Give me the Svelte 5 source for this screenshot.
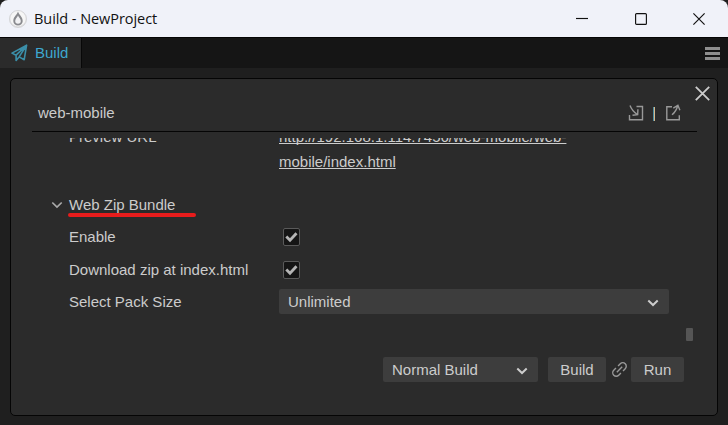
<script>
  let enabled = $state(true);
  let download = $state(true);
</script>

{#snippet chevron()}
  <svg class="chevron" width="12" height="8" viewBox="0 0 12 8"><path d="M1.3 1.5 6 6l4.7-4.5" /></svg>
{/snippet}

{#snippet check(on)}
  <svg width="13" height="12" viewBox="0 0 13 12">
    {#if on}<path d="M1.3 5.5 5 9.3 11.5 2.3" fill="none" stroke="#b5b5b5" stroke-width="2.8" />{/if}
  </svg>
{/snippet}

<div class="window">
  <header class="title-bar">
    <svg class="logo" width="18" height="18" viewBox="0 0 18 18">
      <circle cx="9" cy="9" r="8.6" fill="#dededf" stroke="#cfcfd1" stroke-width=".7" />
      <circle cx="9" cy="8.7" r="7.6" fill="#f6f6f6" />
      <path d="M9 1.6C8.3 4.6 4.3 6.9 4.3 10.9a4.7 4.7 0 0 0 9.4 0C13.7 6.9 9.7 4.6 9 1.6Z" fill="#898a8e" />
      <path d="M9 5.4C8.5 7.2 6.2 8.5 6.2 11a2.8 2.8 0 0 0 5.6 0C11.8 8.5 9.5 7.2 9 5.4Z" fill="#f1f1f3" />
    </svg>
    <span class="title">Build - NewProject</span>
    <div class="controls">
      <svg width="12" height="12" viewBox="0 0 12 12"><path d="M0 5.5h12" /></svg>
      <svg width="12" height="12" viewBox="0 0 12 12"><rect x=".6" y=".6" width="10.8" height="10.8" rx="1" /></svg>
      <svg width="12" height="12" viewBox="0 0 12 12"><path d="m.4.4 11.2 11.2M11.6.4.4 11.6" /></svg>
    </div>
  </header>

  <nav class="tabs">
    <div class="tab">
      <svg width="17" height="18" viewBox="0 0 17 18" fill="none" stroke="#3b8fa9" stroke-width="1.6" stroke-linejoin="round">
        <path d="M15.6 1.2 1 9.1l4.1 2.1v5.2l3-3.5 5.1 2.8ZM5.1 11.2 15.6 1.2 8.1 12.9" />
      </svg>
      <span>Build</span>
    </div>
    <svg class="menu" width="15" height="13" viewBox="0 0 15 13" fill="#8f8f8f">
      <path d="M0 0h15v3H0zM0 5h15v3H0zM0 10h15v3H0z" />
    </svg>
  </nav>

  <main>
    <section class="panel">
      <svg class="close" width="15" height="15" viewBox="0 0 15 15"><path d="m.8.8 13.4 13.4M14.2.8.8 14.2" /></svg>
      <div class="head">
        <span>web-mobile</span>
        <div class="head-icons">
          <svg width="16" height="17" viewBox="0 0 16 17"><path d="M8.5 2.5h6v13.3h-13V11M2 1.5c1.5 3.8 3.6 6.5 7.2 8.9M4.5 11.3l5.2-.6.2-5.4" /></svg>
          <i></i>
          <svg width="16" height="17" viewBox="0 0 16 17"><path d="M7 2.8H1.8v13h12.5v-4.5M7 10.8c2.9-2.3 4.6-5 5.8-9.3M8.3 4.1l4.6-2.8 2 5" /></svg>
        </div>
      </div>
      <div class="scroll">
        <div class="row url">
          <label>Preview URL</label>
          <a href="#url">http://192.168.1.114:7456/web-mobile/web-<br />mobile/index.html</a>
        </div>
        <div class="group">
          {@render chevron()}
          <span class="group-title">Web Zip Bundle</span>
        </div>
        <div class="row">
          <label>Enable</label>
          <button class="box" onclick={() => (enabled = !enabled)}>{@render check(enabled)}</button>
        </div>
        <div class="row second">
          <label>Download zip at index.html</label>
          <button class="box" onclick={() => (download = !download)}>{@render check(download)}</button>
        </div>
        <div class="row">
          <label>Select Pack Size</label>
          <div class="select wide"><span>Unlimited</span>{@render chevron()}</div>
        </div>
        <div class="thumb"></div>
      </div>
      <footer>
        <div class="select mode"><span>Normal Build</span>{@render chevron()}</div>
        <div class="button">Build</div>
        <svg class="link" width="17" height="17" viewBox="0 0 17 17">
          <g transform="rotate(-45 8.5 8.5)">
            <path d="M7 12H3.9a3.5 3.5 0 0 1 0-7H7M10 5h3.1a3.5 3.5 0 0 1 0 7H10M4.7 8.5h7.6" />
          </g>
        </svg>
        <div class="button run">Run</div>
      </footer>
    </section>
  </main>
</div>

<style>
  :global(body) { margin: 0; background: #1f1f1f; }
  .window {
    width: 728px; height: 425px; overflow: hidden; display: flex; flex-direction: column;
    background: #1f1f1f; color: #ccc; font: 15px/25px "Liberation Sans", Arial, sans-serif;
  }
  svg { display: block; flex: none; }
  .title-bar {
    height: 37px; display: flex; align-items: center; background: #f0f2f9;
    border-bottom: 1px solid #050505; border-radius: 8px 8px 0 0; padding: 0 23px 0 9px; color: #111;
  }
  .title { margin-left: 7px; font: 14.5px/20px "Open Sans", sans-serif; letter-spacing: -.06px; }
  .controls { margin-left: auto; display: flex; gap: 46.5px; }
  .controls svg { fill: none; stroke: #111; stroke-width: 1.15; }
  .tabs { height: 30px; display: flex; align-items: center; background: #151515; padding-right: 8px; }
  .tab {
    box-sizing: border-box; width: 82px; height: 30px; padding: 0 0 1px 11px; display: flex; align-items: center;
    gap: 7px; background: #2b2b2b; border-right: 1px solid #080808; color: #3ea7cf;
  }
  .tab span { line-height: 24px; }
  .menu { margin-left: auto; }
  main { flex: 1; padding: 10px 10px 9px; display: flex; }
  .panel {
    position: relative; box-sizing: border-box; width: 708px; height: 338px; border: 1px solid #050505;
    border-radius: 5px; background: #2b2b2b; display: flex; flex-direction: column;
  }
  .close { position: absolute; right: 7px; top: 7px; fill: none; stroke: #ccc; stroke-width: 1.8; }
  .head {
    box-sizing: border-box; height: 53px; margin: 0 20px 0 21px; padding: 21px 16px 6px 6px;
    border-bottom: 1px solid #050505; display: flex; align-items: center; justify-content: space-between;
  }
  .head-icons { display: flex; align-items: center; gap: 0; }
  .head-icons svg { fill: none; stroke: #999; stroke-width: 1.4; }
  .head-icons i { width: 2px; height: 14px; background: linear-gradient(90deg, #4a8ca3 50%, #d6b98c 50%); margin: 2px 10px 0 9px; }
  .scroll { position: relative; height: 207px; margin-top: 6px; padding-left: 58px; overflow: hidden; }
  .row { display: flex; align-items: center; height: 25px; margin-bottom: 7px; }
  .row label { width: 210px; flex: none; }
  .url { height: 50px; margin-top: -14px; margin-bottom: 18px; align-items: flex-start; }
  .url a { color: #ccc; text-decoration-thickness: 1px; text-underline-offset: 1px; text-decoration-skip-ink: none; }
  .group { display: flex; align-items: center; height: 25px; margin: 0 0 7px -18px; }
  .group-title { position: relative; margin-left: 6px; }
  .group-title::after {
    content: ""; position: absolute; left: -1px; top: 20.5px; width: 128px; height: 4px;
    border-radius: 2px; background: #e81c1c;
  }
  .chevron { fill: none; stroke: #ccc; stroke-width: 2; }
  .group .chevron { stroke: #aaa; stroke-width: 1.7; }
  .box {
    box-sizing: border-box; width: 17px; height: 18px; margin: 0 0 0 4px; padding: 0; border: 1px solid #5a5a5a;
    border-radius: 2px; background: #151515; display: flex; align-items: center; justify-content: center;
  }
  .second { margin-top: 8px; }
  .select {
    box-sizing: border-box; height: 25px; padding: 0 10px 0 9px; display: flex; align-items: center;
    justify-content: space-between; background: #3d3d3d; border-radius: 2px;
  }
  .wide { width: 390px; }
  .select .chevron { margin-top: 2px; }
  .thumb { position: absolute; left: 675px; top: 190px; width: 7px; height: 13px; background: #555; border-radius: 1px; }
  footer { display: flex; align-items: center; height: 25px; margin: 12px 0 0 372px; }
  .mode { width: 155px; }
  .button { width: 58px; height: 25px; margin-left: 10px; text-align: center; background: #3d3d3d; border-radius: 2px; }
  .link { margin-left: 5px; fill: none; stroke: #999; stroke-width: 1.4; }
  .run { width: 53px; margin-left: 3px; }
</style>
